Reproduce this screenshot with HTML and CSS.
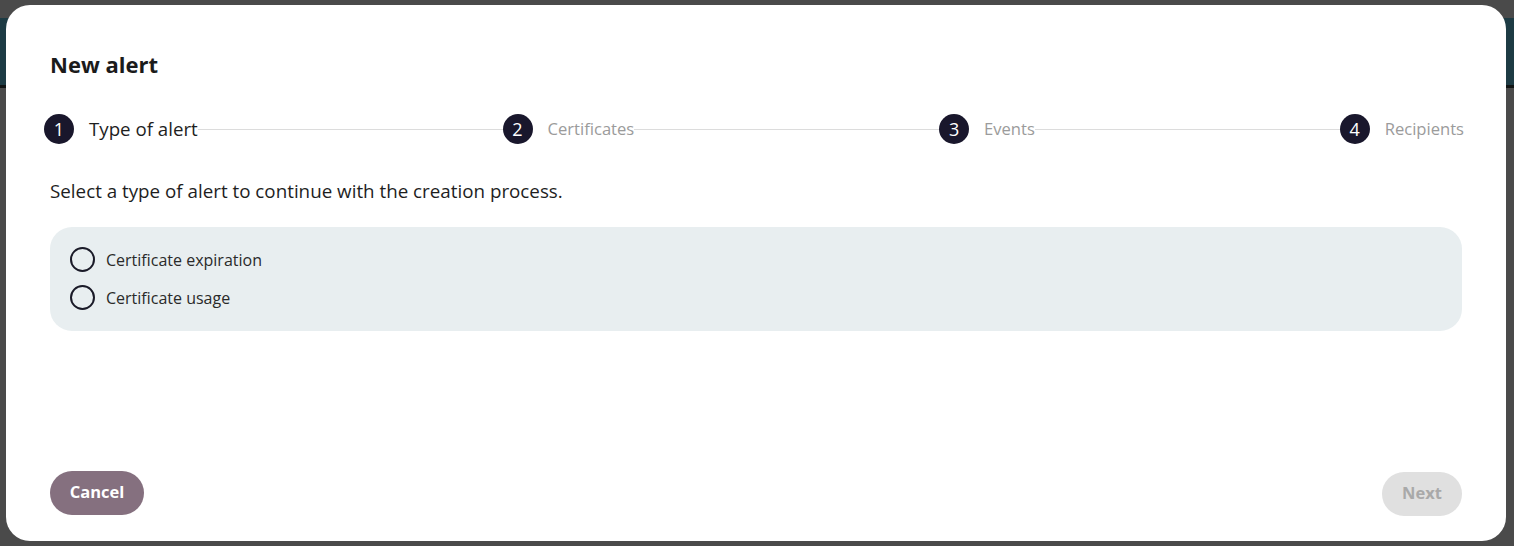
FILE: index.html
```html
<!DOCTYPE html>
<html lang="en">
<head>
<meta charset="utf-8">
<title>New alert</title>
<link rel="stylesheet" href="styles.css">
</head>
<body>
<div class="page">
  <div class="app-header"></div>
</div>
<div class="overlay">
  <div class="modal" role="dialog" aria-labelledby="modal-title">
    <h1 class="modal-title" id="modal-title">New alert</h1>
    <ol class="stepper">
      <li class="step step-active"><span class="step-num">1</span><span class="step-label">Type of alert</span></li>
      <li class="step-line"></li>
      <li class="step"><span class="step-num">2</span><span class="step-label">Certificates</span></li>
      <li class="step-line"></li>
      <li class="step"><span class="step-num">3</span><span class="step-label">Events</span></li>
      <li class="step-line"></li>
      <li class="step"><span class="step-num">4</span><span class="step-label">Recipients</span></li>
    </ol>
    <p class="intro">Select a type of alert to continue with the creation process.</p>
    <div class="options">
      <label class="option"><input type="radio" name="type"><span class="radio"></span><span class="option-label">Certificate expiration</span></label>
      <label class="option"><input type="radio" name="type"><span class="radio"></span><span class="option-label">Certificate usage</span></label>
    </div>
    <div class="modal-footer">
      <button class="btn btn-cancel" type="button">Cancel</button>
      <button class="btn btn-next" type="button" disabled>Next</button>
    </div>
  </div>
</div>
</body>
</html>
```

FILE: styles.css
```css
* { box-sizing: border-box; }
html, body { margin: 0; padding: 0; }
body {
  width: 1514px;
  height: 546px;
  background: #4a4a4a;
  font-family: "Open Sans", "Noto Sans", sans-serif;
  color: #1e1e1e;
  overflow: hidden;
  position: relative;
}
.page { padding-top: 18px; }
.app-header {
  height: 70px;
  background: #1d3b44;
  border-bottom: 3px solid #101414;
}
.overlay {
  position: absolute;
  inset: 0;
}
.modal {
  position: absolute;
  left: 6px;
  top: 5px;
  width: 1500px;
  height: 536px;
  background: #fff;
  border-radius: 24px;
  padding: 45px 44px 26px;
  display: flex;
  flex-direction: column;
}
.modal-title {
  margin: 0;
  font-size: 22px;
  line-height: 28px;
  font-weight: 700;
  color: #1b1b1b;
}
.stepper {
  list-style: none;
  margin: 36px -2px 0 -6px;
  padding: 0;
  display: flex;
  align-items: center;
}
.step {
  display: flex;
  align-items: center;
  gap: 15px;
}
.step-num {
  width: 30px;
  height: 30px;
  border-radius: 50%;
  background: #19172c;
  color: #fff;
  font-size: 18px;
  line-height: 1;
  display: flex;
  align-items: center;
  justify-content: center;
}
.step-label {
  font-size: 16.6px;
  line-height: 22px;
  color: #9b9b9b;
}
.step-active .step-label { color: #1e1e1e; font-size: 18.7px; }
.step-line {
  flex: 1;
  height: 1px;
  background: #dcdcdc;
}
.intro {
  margin: 35px 0 0;
  font-size: 18.8px;
  line-height: 24px;
  color: #1e1e1e;
}
.options {
  margin-top: 24px;
  background: #e8eef0;
  border-radius: 22px;
  padding: 20px 20px 21px;
  display: flex;
  flex-direction: column;
  gap: 13px;
}
.option {
  display: flex;
  align-items: center;
  gap: 11px;
  cursor: pointer;
}
.option input { display: none; }
.radio {
  width: 25px;
  height: 25px;
  border: 2px solid #1a1a28;
  border-radius: 50%;
  background: transparent;
}
.option-label {
  font-size: 16px;
  line-height: 24px;
  color: #2a2a2a;
}
.modal-footer {
  margin-top: auto;
  display: flex;
  justify-content: space-between;
  align-items: flex-end;
}
.btn {
  font-family: inherit;
  font-weight: 700;
  font-size: 16.5px;
  border: none;
  border-radius: 22px;
  height: 44px;
  padding: 0 0 3px;
}
.btn-cancel {
  width: 94px;
  background: #85707f;
  color: #fff;
}
.btn-next {
  width: 80px;
  background: #e0e0e0;
  color: #a9a9a9;
  margin-bottom: -1px;
}
```
